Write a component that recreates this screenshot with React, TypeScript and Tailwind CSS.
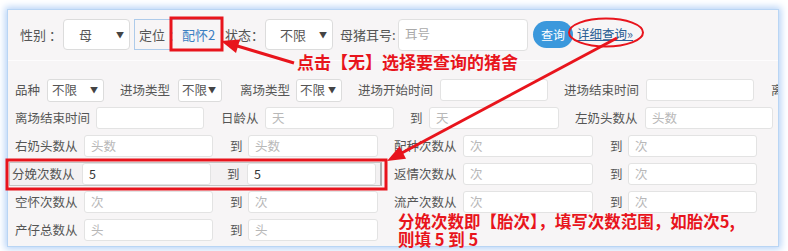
const font = { fontFamily: '"Noto Sans CJK SC", "Noto Sans", sans-serif' };

const Input = ({ w, ph, value }: { w: string; ph?: string; value?: string }) => (
  <div
    className={`${w} h-[22px] shrink-0 rounded-[3px] border border-[#e3e3e3] bg-white pl-[6px] flex items-center text-[12.5px] ${
      value ? "text-[#333]" : "text-[#b8b8b8]"
    }`}
  >
    {value ?? ph}
  </div>
);

const Select = ({ w, pl, ml }: { w: string; pl: string; ml: string }) => (
  <div
    className={`${w} ${ml} h-[23px] shrink-0 rounded-[3px] border border-[#dcdcdc] bg-white ${pl} pr-[5px] flex items-center justify-between text-[12.5px] text-[#555]`}
  >
    <span>不限</span>
    <span className="text-[8px] text-[#444]">▼</span>
  </div>
);

const Label = ({ w, text, ml }: { w: string; text: string; ml?: string }) => (
  <span className={`${w} ${ml ?? ""} shrink-0 whitespace-nowrap text-[12.5px] text-[#555]`}>{text}</span>
);

const RangeRow = ({
  a,
  aPh,
  b,
  bPh,
}: {
  a: string;
  aPh: string;
  b: string;
  bPh: string;
}) => (
  <>
    <Label w="w-[69px]" text={a} />
    <Input w="w-[129px]" ph={aPh} />
    <Label w="w-[18px]" ml="ml-[17px]" text="到" />
    <Input w="w-[130px]" ph={aPh} />
    <Label w="w-[69px]" ml="ml-[16px]" text={b} />
    <Input w="w-[130px]" ph={bPh} />
    <Label w="w-[18px]" ml="ml-[17px]" text="到" />
    <Input w="w-[129px]" ph={bPh} />
  </>
);

export default function App() {
  return (
    <div className="relative w-[788px] h-[251px] overflow-hidden bg-white pt-[9px] pl-[7px]" style={font}>
      <div className="w-[772px] h-[238px] overflow-hidden border border-[#b9d5f4] bg-[#f7f5f6] shadow-[0_0_7px_2px_#b7d3f7]">
        {/* top query bar */}
        <div className="pt-[8px] pb-[9px] border-b border-[#fdfcfd] flex items-center pl-[12px] h-[51px]">
          <span className="w-[43px] shrink-0 whitespace-nowrap text-[13px] text-[#555]">性别 ：</span>
          <div className="w-[67px] h-[31px] shrink-0 rounded-[4px] border border-[#dcdcdc] bg-white pl-[15px] pr-[5px] flex items-center justify-between text-[13px] text-[#555]">
            <span>母</span>
            <span className="text-[8px] text-[#444]">▼</span>
          </div>
          <div className="ml-[4px] w-[88px] h-[31px] shrink-0 border border-[#aecbea] flex items-center pl-[4px] text-[13px] whitespace-nowrap">
            <span className="text-[#555] w-[43px] shrink-0 whitespace-nowrap">定位 ：</span>
            <span className="text-[#3b7fc2]">配怀2</span>
          </div>
          <span className="ml-[3px] w-[40px] shrink-0 whitespace-nowrap text-[13px] text-[#555]">状态：</span>
          <div className="w-[68px] h-[31px] shrink-0 rounded-[4px] border border-[#dcdcdc] bg-white pl-[14px] pr-[5px] flex items-center justify-between text-[13px] text-[#555]">
            <span>不限</span>
            <span className="text-[8px] text-[#444]">▼</span>
          </div>
          <span className="ml-[7px] w-[58px] shrink-0 whitespace-nowrap text-[13px] text-[#555]">母猪耳号:</span>
          <div className="w-[130px] h-[32px] shrink-0 rounded-[4px] border border-[#e0e0e0] bg-white pl-[6px] flex items-center text-[12.5px] text-[#aaa]">
            耳号
          </div>
          <div className="ml-[5px] w-[40px] h-[27px] shrink-0 rounded-full bg-[#3b98dc] flex items-center justify-center text-[12px] text-white">
            查询
          </div>
          <span className="ml-[4px] text-[12.5px] text-[#2b5f94] underline">详细查询»</span>
        </div>

        {/* detail rows */}
        <div className="pt-[18px] pl-[7px] flex flex-col gap-[6px]">
          <div className="h-[22px] flex items-center">
            <Label w="w-[25px]" text="品种" />
            <Select w="w-[57px]" pl="pl-[4px]" ml="ml-[7px]" />
            <Label w="w-[50px]" ml="ml-[16px]" text="进场类型" />
            <Select w="w-[44px]" pl="pl-[3px]" ml="ml-[8px]" />
            <Label w="w-[50px]" ml="ml-[18px]" text="离场类型" />
            <Select w="w-[46px]" pl="pl-[3px]" ml="ml-[6px]" />
            <Label w="w-[75px]" ml="ml-[16px]" text="进场开始时间" />
            <div className="ml-[7px]">
              <Input w="w-[108px]" />
            </div>
            <Label w="w-[75px]" ml="ml-[16px]" text="进场结束时间" />
            <div className="ml-[7px]">
              <Input w="w-[108px]" />
            </div>
            <Label w="w-[13px]" ml="ml-[17px]" text="离" />
          </div>

          <div className="h-[22px] flex items-center">
            <Label w="w-[81px]" text="离场结束时间" />
            <Input w="w-[108px]" />
            <Label w="w-[44px]" ml="ml-[17px]" text="日龄从" />
            <Input w="w-[129px]" ph="天" />
            <Label w="w-[19px]" ml="ml-[16px]" text="到" />
            <Input w="w-[130px]" ph="天" />
            <Label w="w-[70px]" ml="ml-[16px]" text="左奶头数从" />
            <Input w="w-[128px]" ph="头数" />
          </div>

          <div className="h-[22px] flex items-center">
            <RangeRow a="右奶头数从" aPh="头数" b="配种次数从" bPh="次" />
          </div>

          <div className="h-[22px] flex items-center">
            <div className="-ml-[6px] w-[373px] h-[24px] shrink-0 border border-[#c4c4c4] border-r-2 border-r-[#b0b0b0] bg-[#f3f1f2] pl-[2px] flex items-center">
              <Label w="w-[70px]" text="分娩次数从" />
              <Input w="w-[129px]" value="5" />
              <Label w="w-[20px]" ml="ml-[16px]" text="到" />
              <Input w="w-[129px]" value="5" />
            </div>
            <Label w="w-[69px]" ml="ml-[12px]" text="返情次数从" />
            <Input w="w-[130px]" ph="次" />
            <Label w="w-[18px]" ml="ml-[17px]" text="到" />
            <Input w="w-[129px]" ph="次" />
          </div>

          <div className="h-[22px] flex items-center">
            <RangeRow a="空怀次数从" aPh="次" b="流产次数从" bPh="次" />
          </div>

          <div className="h-[22px] flex items-center">
            <Label w="w-[69px]" text="产仔总数从" />
            <Input w="w-[129px]" ph="头" />
            <Label w="w-[18px]" ml="ml-[17px]" text="到" />
            <Input w="w-[130px]" ph="头" />
          </div>
        </div>
      </div>

      {/* annotations */}
      <svg className="absolute left-0 top-0 pointer-events-none" width="788" height="251" viewBox="0 0 788 251">
        <rect x="171" y="18" width="51" height="32" fill="none" stroke="#e8141c" strokeWidth="3" />
        <rect x="7" y="160" width="379" height="29" fill="none" stroke="#e8141c" strokeWidth="3" />
        <ellipse cx="606" cy="32.5" rx="37" ry="14" fill="none" stroke="#e8141c" strokeWidth="2" />
        <line x1="294" y1="63" x2="234" y2="45" stroke="#e8141c" strokeWidth="3" />
        <polygon points="221,41 236,53 240,39.6" fill="#e8141c" />
        <line x1="617" y1="38" x2="398" y2="155" stroke="#e8141c" strokeWidth="3" />
        <polygon points="387,161 406,158.7 399.6,146.3" fill="#e8141c" />
      </svg>
      <div className="absolute left-[297px] top-[51px] text-[17px] leading-[21px] font-bold text-[#e8141c] whitespace-nowrap">
        点击【无】选择要查询的猪舍
      </div>
      <div className="absolute left-[398px] top-[212px] text-[16.5px] leading-[18px] font-bold text-[#e8141c] whitespace-pre">
        {"分娩次数即【胎次】，填写次数范围，如胎次5,\n则填 5 到 5"}
      </div>
    </div>
  );
}
